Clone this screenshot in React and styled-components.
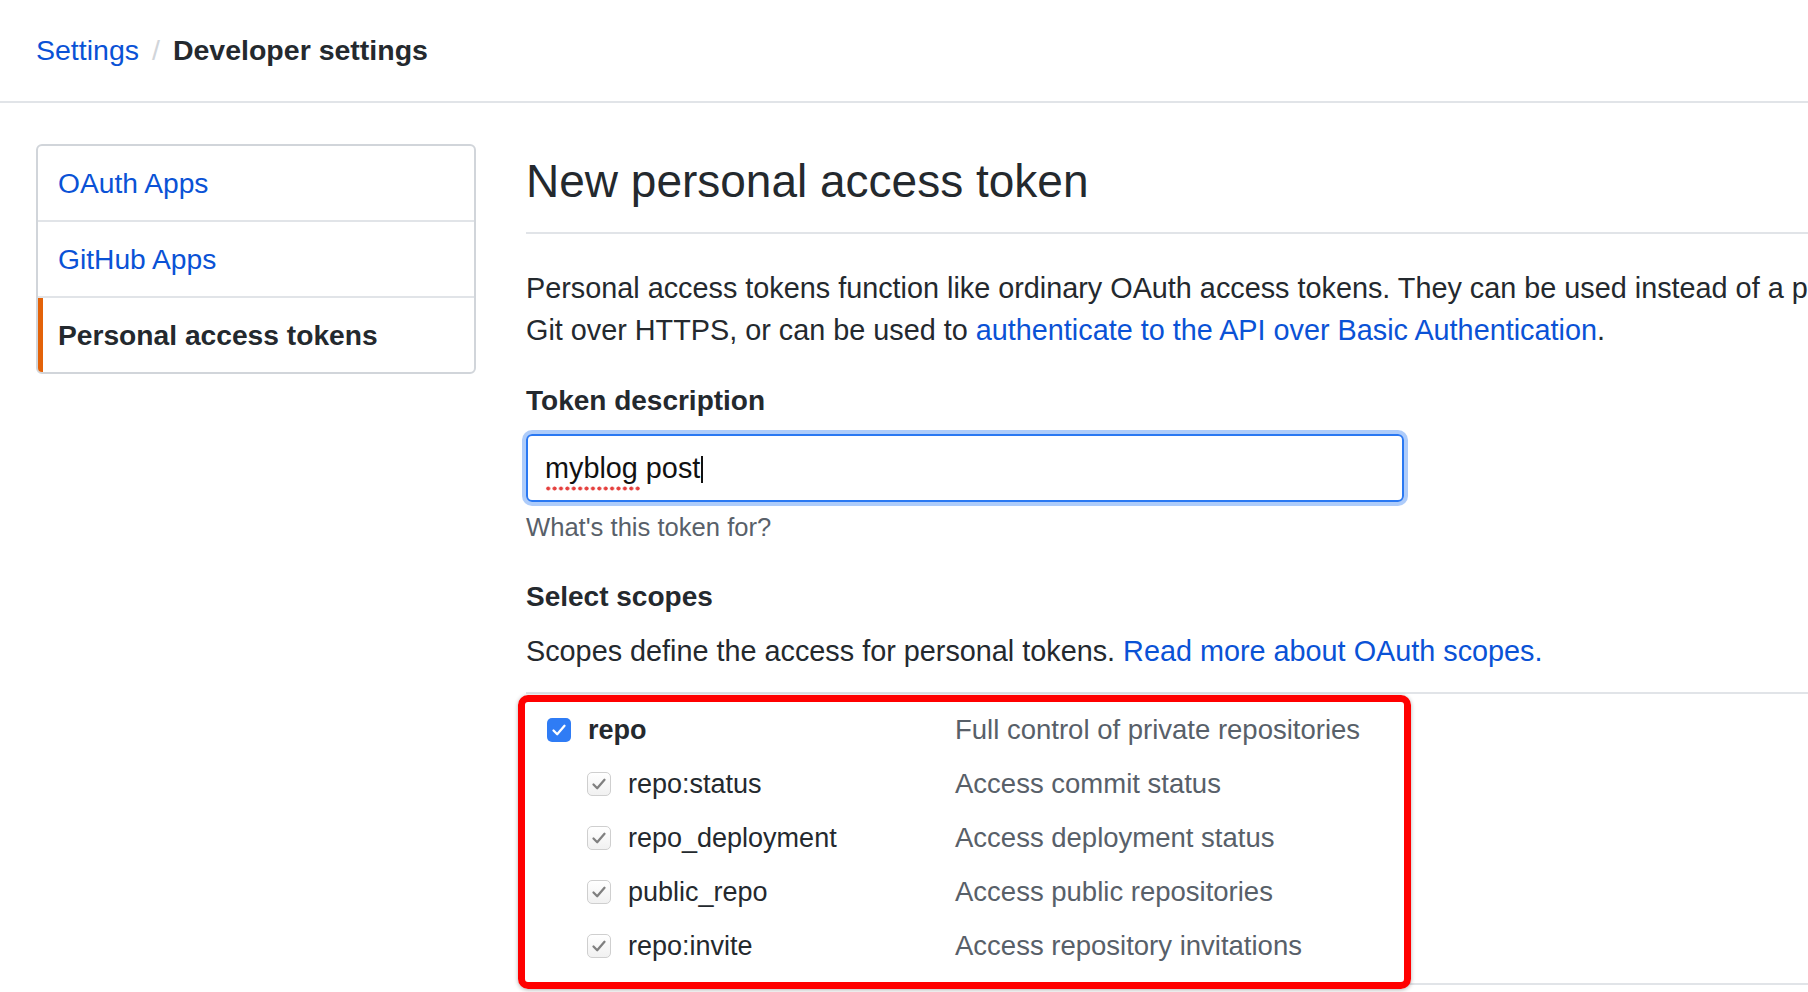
import React from "react";
import styled, { createGlobalStyle } from "styled-components";

const GlobalStyle = createGlobalStyle`
  html, body {
    margin: 0;
    padding: 0;
    background: #fff;
  }
  body {
    font-family: "Liberation Sans", Arial, Helvetica, sans-serif;
    color: #24292e;
    overflow: hidden;
  }
`;

const LINK = "#0a52d6";
const BORDER = "#e1e4e8";

const Page = styled.div`
  width: 1808px;
  height: 992px;
  overflow: hidden;
`;

const Header = styled.header`
  display: flex;
  align-items: center;
  height: 101px;
  padding-left: 36px;
  border-bottom: 2px solid ${BORDER};
  font-size: 28.5px;
`;

const Crumb = styled.a`
  color: ${LINK};
  text-decoration: none;
`;

const Slash = styled.span`
  color: #d1d5da;
  margin: 0 13px;
`;

const Current = styled.strong`
  font-weight: 700;
`;

const Layout = styled.div`
  display: flex;
  gap: 50px;
  padding: 41px 0 0 36px;
`;

const Menu = styled.nav`
  flex: 0 0 440px;
  align-self: flex-start;
  box-sizing: border-box;
  border: 2px solid #d1d5da;
  border-radius: 6px;
  overflow: hidden;
`;

const MenuItem = styled.a`
  display: flex;
  align-items: center;
  height: 74px;
  padding-left: 20px;
  font-size: 28.2px;
  text-decoration: none;
  color: ${p => (p.$selected ? "#24292e" : LINK)};
  font-weight: ${p => (p.$selected ? 700 : 400)};
  box-shadow: ${p => (p.$selected ? "inset 5px 0 0 #e36209" : "none")};
  & + & {
    border-top: 2px solid ${BORDER};
  }
`;

const Main = styled.main`
  flex: 0 0 1450px;
`;

const Subhead = styled.div`
  padding: 8px 0 22px;
  border-bottom: 2px solid ${BORDER};
`;

const Title = styled.h2`
  margin: 0;
  font-size: 46px;
  font-weight: 400;
  line-height: 58px;
`;

const Lead = styled.p`
  margin: ${p => p.$top || 0}px 0 0;
  font-size: 28.8px;
  line-height: 42px;
`;

const Link = styled.a`
  color: ${LINK};
  text-decoration: none;
`;

const Label = styled.h3`
  margin: ${p => p.$top}px 0 0;
  font-size: 28px;
  font-weight: 700;
  line-height: 42px;
`;

const Field = styled.div`
  box-sizing: border-box;
  display: flex;
  align-items: center;
  width: 878px;
  height: 68px;
  margin-top: 12px;
  padding: 0 17px;
  border: 2px solid #2a78f2;
  border-radius: 6px;
  box-shadow: 0 0 0 4px rgba(42, 120, 242, 0.38);
  font-size: 28.8px;
  color: #111;
`;

const Misspelled = styled.span`
  position: relative;
  &::after {
    content: "";
    position: absolute;
    left: 0;
    right: -2px;
    bottom: -6px;
    height: 5px;
    background-image: radial-gradient(circle, #e5403e 1.7px, transparent 2.3px);
    background-size: 6.4px 5px;
    background-repeat: repeat-x;
  }
`;

const Caret = styled.span`
  display: inline-block;
  width: 2px;
  height: 27px;
  margin-left: 1px;
  margin-top: 3px;
  background: #111;
`;

const Note = styled.p`
  margin: 8px 0 0;
  font-size: 25.6px;
  line-height: 34px;
  color: #586069;
`;

const ScopeTable = styled.div`
  position: relative;
  margin-top: 20px;
  padding: 9px 0 10px;
  border-top: 2px solid ${BORDER};
  border-bottom: 2px solid ${BORDER};
`;

const Annotation = styled.div`
  position: absolute;
  left: -8px;
  top: 1px;
  width: 893px;
  height: 294px;
  box-sizing: border-box;
  border: 7px solid #ff0000;
  border-radius: 10px;
  box-shadow: 0 1px 4px rgba(0, 0, 0, 0.3);
  pointer-events: none;
`;

const ScopeRow = styled.div`
  display: grid;
  grid-template-columns: 429px 1fr;
  align-items: center;
  height: 54px;
`;

const ScopeName = styled.label`
  display: flex;
  align-items: center;
  gap: 17px;
  padding-left: ${p => (p.$nested ? 61 : 21)}px;
  font-size: 27px;
  font-weight: ${p => (p.$nested ? 400 : 700)};
`;

const Box = styled.span`
  display: inline-flex;
  align-items: center;
  justify-content: center;
  box-sizing: border-box;
  width: 24px;
  height: 24px;
  border-radius: 5px;
  background: ${p => (p.$nested ? "linear-gradient(#fff, #f1f1f1)" : "#2f7cf5")};
  border: ${p => (p.$nested ? "1.5px solid #cfcfcf" : "none")};
`;

const ScopeDesc = styled.span`
  font-size: 27.5px;
  color: #586069;
`;

function Check({ nested }) {
  return (
    <Box $nested={nested}>
      <svg width="18" height="18" viewBox="0 0 18 18">
        <polyline
          points="3.5,9.5 7.2,13.2 14.5,4.8"
          fill="none"
          stroke={nested ? "#808080" : "#fff"}
          strokeWidth="2.3"
          strokeLinecap="round"
          strokeLinejoin="round"
        />
      </svg>
    </Box>
  );
}

const scopes = [
  { name: "repo", desc: "Full control of private repositories" },
  { name: "repo:status", desc: "Access commit status", nested: true },
  { name: "repo_deployment", desc: "Access deployment status", nested: true },
  { name: "public_repo", desc: "Access public repositories", nested: true },
  { name: "repo:invite", desc: "Access repository invitations", nested: true }
];

export default function App() {
  return (
    <Page>
      <GlobalStyle />
      <Header>
        <Crumb href="#">Settings</Crumb>
        <Slash>/</Slash>
        <Current>Developer settings</Current>
      </Header>
      <Layout>
        <Menu>
          <MenuItem href="#">OAuth Apps</MenuItem>
          <MenuItem href="#">GitHub Apps</MenuItem>
          <MenuItem href="#" $selected>
            Personal access tokens
          </MenuItem>
        </Menu>
        <Main>
          <Subhead>
            <Title>New personal access token</Title>
          </Subhead>
          <Lead $top={33}>
            Personal access tokens function like ordinary OAuth access tokens. They can be used
            instead of a password for
            <br />
            Git over HTTPS, or can be used to{" "}
            <Link href="#">authenticate to the API over Basic Authentication</Link>.
          </Lead>
          <Label $top={29}>Token description</Label>
          <Field>
            <Misspelled>myblog</Misspelled>&nbsp;post
            <Caret />
          </Field>
          <Note>What's this token for?</Note>
          <Label $top={32}>Select scopes</Label>
          <Lead $top={12}>
            Scopes define the access for personal tokens.{" "}
            <Link href="#">Read more about OAuth scopes.</Link>
          </Lead>
          <ScopeTable>
            {scopes.map(s => (
              <ScopeRow key={s.name}>
                <ScopeName $nested={s.nested}>
                  <Check nested={s.nested} />
                  {s.name}
                </ScopeName>
                <ScopeDesc>{s.desc}</ScopeDesc>
              </ScopeRow>
            ))}
            <Annotation />
          </ScopeTable>
        </Main>
      </Layout>
    </Page>
  );
}
